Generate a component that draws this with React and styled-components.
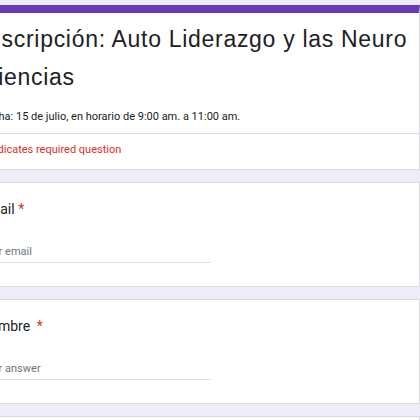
import React from "react";
import styled, { createGlobalStyle } from "styled-components";

const GlobalStyle = createGlobalStyle`
  html, body {
    margin: 0;
    padding: 0;
    background: #f0ebf8;
    overflow: hidden;
  }
  body {
    font-family: Roboto, "Liberation Sans", Arial, sans-serif;
    color: #202124;
  }
`;

const questions = [
  { id: "email", label: "Email", placeholder: "Your email", starGap: 0 },
  { id: "nombre", label: "Nombre", placeholder: "Your answer", starGap: 3 },
  { id: "telefono", label: "Teléfono", placeholder: "Your answer", starGap: 0 },
];

function App() {
  return (
    <>
      <GlobalStyle />
      <Form>
        <HeaderCard>
          <HeaderMain>
            <Title>Inscripción: Auto Liderazgo y las Neuro Ciencias</Title>
            <Description>
              Fecha: 15 de julio, en horario de 9:00 am. a 11:00 am.
            </Description>
          </HeaderMain>
          <RequiredNote>* Indicates required question</RequiredNote>
        </HeaderCard>

        {questions.map((q) => (
          <QuestionCard key={q.id}>
            <Label>
              {q.label} <Star $gap={q.starGap}>*</Star>
            </Label>
            <Input placeholder={q.placeholder} readOnly />
          </QuestionCard>
        ))}
      </Form>
    </>
  );
}

export default App;

const Form = styled.main`
  display: flex;
  flex-direction: column;
  gap: 12px;
  padding-top: 5px;
  margin-left: -43px;
  width: 463px;
`;

const Card = styled.section`
  background: #ffffff;
  border: 1px solid #dadce0;
  box-sizing: border-box;
`;

const HeaderCard = styled(Card)`
  border-top: 8px solid #673ab7;
`;

const HeaderMain = styled.div`
  padding: 7px 0 8px 23px;
  border-bottom: 1px solid #dadce0;
`;

const Title = styled.h1`
  margin: 0;
  font-family: "Liberation Sans", Arial, sans-serif;
  font-size: 23px;
  line-height: 38px;
  font-weight: 400;
  letter-spacing: 0.7px;
  color: #202124;
`;

const Description = styled.p`
  margin: 13px 0 0;
  font-size: 11px;
  line-height: 16px;
  color: #202124;
`;

const RequiredNote = styled.p`
  margin: 0;
  padding: 8px 0 11px 23px;
  font-size: 11px;
  line-height: 16px;
  color: #d93025;
`;

const QuestionCard = styled(Card)`
  display: flex;
  flex-direction: column;
  align-items: flex-start;
  padding: 16px 0 23px 22px;
`;

const Label = styled.div`
  font-size: 14px;
  line-height: 20px;
  color: #202124;
  white-space: pre;
`;

const Star = styled.span`
  margin-left: ${(p) => p.$gap}px;
  color: #d93025;
`;

const Input = styled.input`
  margin-top: 24px;
  width: 231px;
  padding: 0 0 3px;
  border: none;
  border-bottom: 1px solid #e0e0e0;
  outline: none;
  background: transparent;
  font-family: Roboto, "Liberation Sans", Arial, sans-serif;
  font-size: 11px;
  line-height: 16px;
  height: 20px;
  box-sizing: border-box;
  color: #202124;

  &::placeholder {
    color: #70757a;
  }
`;
